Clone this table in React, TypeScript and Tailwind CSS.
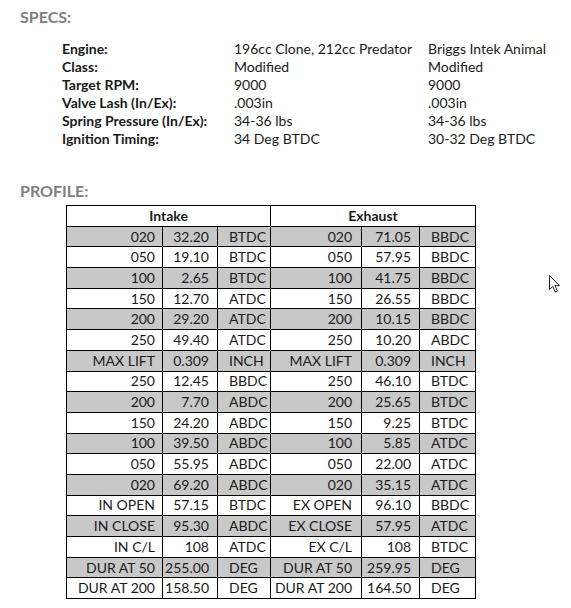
import React from "react";

const specs: [string, string, string][] = [
  ["Engine:", "196cc Clone, 212cc Predator", "Briggs Intek Animal"],
  ["Class:", "Modified", "Modified"],
  ["Target RPM:", "9000", "9000"],
  ["Valve Lash (In/Ex):", ".003in", ".003in"],
  ["Spring Pressure (In/Ex):", "34-36 lbs", "34-36 lbs"],
  ["Ignition Timing:", "34 Deg BTDC", "30-32 Deg BTDC"],
];

const rows: [string, string, string, string, string, string][] = [
  ["020", "32.20", "BTDC", "020", "71.05", "BBDC"],
  ["050", "19.10", "BTDC", "050", "57.95", "BBDC"],
  ["100", "2.65", "BTDC", "100", "41.75", "BBDC"],
  ["150", "12.70", "ATDC", "150", "26.55", "BBDC"],
  ["200", "29.20", "ATDC", "200", "10.15", "BBDC"],
  ["250", "49.40", "ATDC", "250", "10.20", "ABDC"],
  ["MAX LIFT", "0.309", "INCH", "MAX LIFT", "0.309", "INCH"],
  ["250", "12.45", "BBDC", "250", "46.10", "BTDC"],
  ["200", "7.70", "ABDC", "200", "25.65", "BTDC"],
  ["150", "24.20", "ABDC", "150", "9.25", "BTDC"],
  ["100", "39.50", "ABDC", "100", "5.85", "ATDC"],
  ["050", "55.95", "ABDC", "050", "22.00", "ATDC"],
  ["020", "69.20", "ABDC", "020", "35.15", "ATDC"],
  ["IN OPEN", "57.15", "BTDC", "EX OPEN", "96.10", "BBDC"],
  ["IN CLOSE", "95.30", "ABDC", "EX CLOSE", "57.95", "ATDC"],
  ["IN C/L", "108", "ATDC", "EX C/L", "108", "BTDC"],
  ["DUR AT 50", "255.00", "DEG", "DUR AT 50", "259.95", "DEG"],
  ["DUR AT 200", "158.50", "DEG", "DUR AT 200", "164.50", "DEG"],
];

export default function App() {
  return (
    <div className="relative w-[571px] h-[608px] bg-white font-['Lato',sans-serif] text-[#1a1a1a] overflow-hidden">
      <div className="pl-[20px] pt-[7px] text-[16px] leading-[20px] font-bold text-[#808080]">SPECS:</div>
      <div className="mt-[13px] pl-[62px] grid grid-cols-[172px_194px_auto] text-[14px] leading-[18px]">
        {specs.map((s, i) => (
          <React.Fragment key={i}>
            <div className="font-bold">{s[0]}</div>
            <div>{s[1]}</div>
            <div>{s[2]}</div>
          </React.Fragment>
        ))}
      </div>
      <div className="mt-[33px] pl-[20px] text-[16px] leading-[20px] font-bold text-[#808080]">PROFILE:</div>
      <div className="mt-[4px] ml-[66px]">
        <table className="border-collapse text-[14px] leading-[16px] table-fixed w-[409px]">
          <colgroup>
            <col className="w-[96px]" />
            <col className="w-[55px]" />
            <col className="w-[53px]" />
            <col className="w-[91px]" />
            <col className="w-[58px]" />
            <col className="w-[56px]" />
          </colgroup>
          <tbody>
            <tr className="h-[20.7px]">
              <td colSpan={3} className="border border-black text-center font-bold p-0">Intake</td>
              <td colSpan={3} className="border border-black text-center font-bold p-0">Exhaust</td>
            </tr>
            {rows.map((r, i) => (
              <tr key={i} className={"h-[20.7px] " + (i % 2 === 0 ? "bg-[#c8c8c8]" : "bg-white")}>
                <td className="border border-black text-right pr-[7px] py-0 whitespace-nowrap">{r[0]}</td>
                <td className="border border-black text-right pr-[8px] py-0">{r[1]}</td>
                <td className="border border-black text-left pl-[11px] py-0">{r[2]}</td>
                <td className="border border-black text-right pr-[9px] py-0 whitespace-nowrap">{r[3]}</td>
                <td className="border border-black text-right pr-[8px] py-0">{r[4]}</td>
                <td className="border border-black text-left pl-[11px] py-0">{r[5]}</td>
              </tr>
            ))}
          </tbody>
        </table>
      </div>
      <svg className="absolute left-[548px] top-[274px]" width="13" height="20" viewBox="0 0 13 20">
        <path d="M1.5 1.5 L1.5 15.5 L4.8 12.4 L7.2 18 L9.4 17 L7.1 11.6 L11.5 11.6 Z" fill="white" stroke="#222" strokeWidth="1" strokeLinejoin="miter" />
      </svg>
    </div>
  );
}
